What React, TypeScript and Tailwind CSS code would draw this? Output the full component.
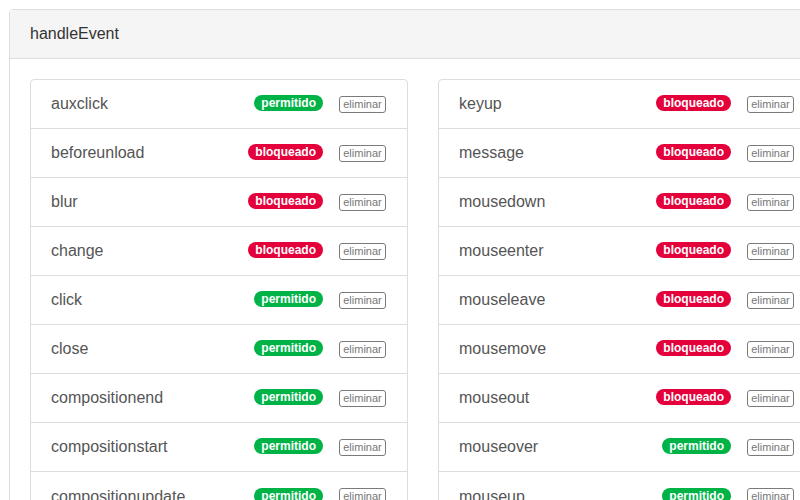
import React from 'react';

type Ev = { name: string; allowed: boolean };

const left: Ev[] = [
  { name: 'auxclick', allowed: true },
  { name: 'beforeunload', allowed: false },
  { name: 'blur', allowed: false },
  { name: 'change', allowed: false },
  { name: 'click', allowed: true },
  { name: 'close', allowed: true },
  { name: 'compositionend', allowed: true },
  { name: 'compositionstart', allowed: true },
  { name: 'compositionupdate', allowed: true },
];

const right: Ev[] = [
  { name: 'keyup', allowed: false },
  { name: 'message', allowed: false },
  { name: 'mousedown', allowed: false },
  { name: 'mouseenter', allowed: false },
  { name: 'mouseleave', allowed: false },
  { name: 'mousemove', allowed: false },
  { name: 'mouseout', allowed: false },
  { name: 'mouseover', allowed: true },
  { name: 'mouseup', allowed: true },
];

function EventList({ items }: { items: Ev[] }) {
  return (
    <ul className="w-[378px] shrink-0 border border-[#dddddd] rounded">
      {items.map((ev, i) => (
        <li
          key={ev.name}
          className={`h-[49px] flex items-center pl-5 pr-[21px] ${i < items.length - 1 ? 'border-b border-[#dddddd]' : ''}`}
        >
          <span className="flex-1 text-[16px] text-[#555555]">{ev.name}</span>
          {ev.allowed ? (
            <span className="h-4 mb-[2px] px-[7px] rounded-full bg-[#00b347] text-white text-[12px] font-bold leading-4">
              permitido
            </span>
          ) : (
            <span className="h-4 mb-[2px] px-[7px] rounded-full bg-[#e4003b] text-white text-[12px] font-bold leading-4">
              bloqueado
            </span>
          )}
          <button className="ml-4 w-[47px] h-[17px] border border-[#7a7a7a] rounded-[3px] text-[11px] leading-[15px] text-[#777777] bg-white">
            eliminar
          </button>
        </li>
      ))}
    </ul>
  );
}

export default function App() {
  return (
    <div
      className="w-[800px] h-[500px] overflow-hidden bg-white pl-[9px] pt-[9px]"
      style={{ fontFamily: '"Liberation Sans", Arial, sans-serif' }}
    >
      <div className="w-[840px] border border-[#dddddd] rounded">
        <div className="h-[49px] bg-[#f5f5f5] border-b border-[#dddddd] flex items-center px-5 text-[16px] text-[#333333]">
          handleEvent
        </div>
        <div className="px-5 pt-5 flex gap-[30px]">
          <EventList items={left} />
          <EventList items={right} />
        </div>
      </div>
    </div>
  );
}
